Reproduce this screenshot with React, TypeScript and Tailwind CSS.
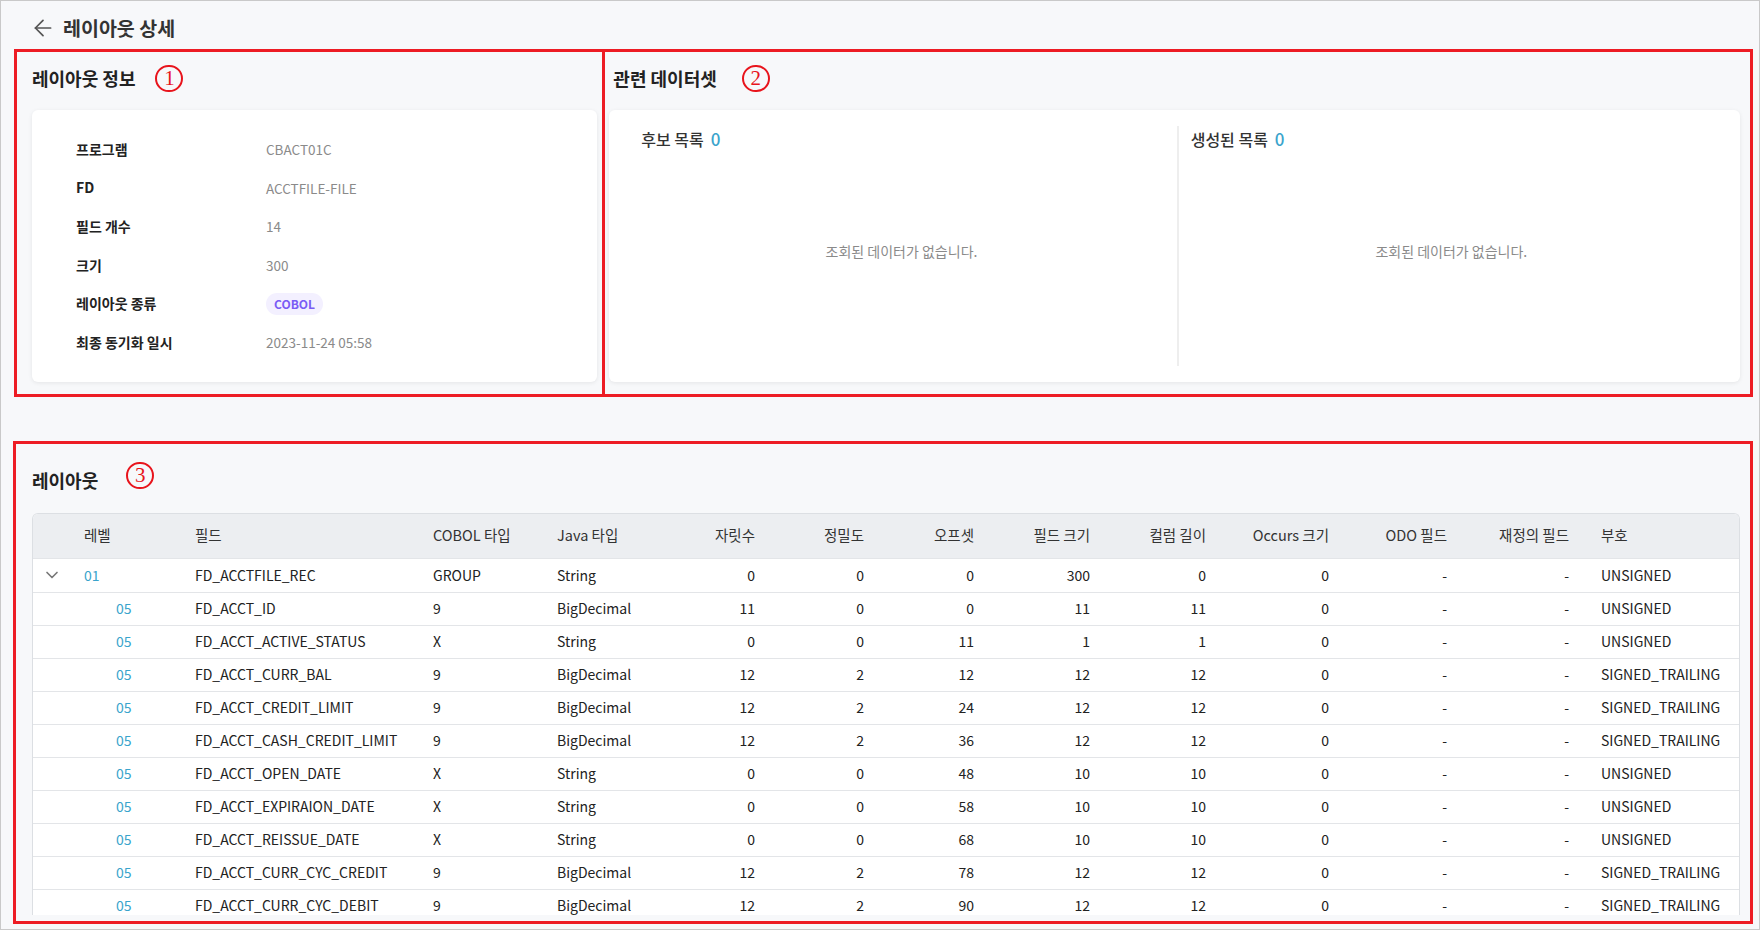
import React from "react";
import { ArrowLeft, ChevronDown } from "lucide-react";

type Row = {
  level: string;
  field: string;
  cobol: string;
  java: string;
  digits: number;
  precision: number;
  offset: number;
  size: number;
  length: number;
  occurs: number;
  odo: string;
  redefines: string;
  sign: string;
};

const rows: Row[] = [
  { level: "01", field: "FD_ACCTFILE_REC", cobol: "GROUP", java: "String", digits: 0, precision: 0, offset: 0, size: 300, length: 0, occurs: 0, odo: "-", redefines: "-", sign: "UNSIGNED" },
  { level: "05", field: "FD_ACCT_ID", cobol: "9", java: "BigDecimal", digits: 11, precision: 0, offset: 0, size: 11, length: 11, occurs: 0, odo: "-", redefines: "-", sign: "UNSIGNED" },
  { level: "05", field: "FD_ACCT_ACTIVE_STATUS", cobol: "X", java: "String", digits: 0, precision: 0, offset: 11, size: 1, length: 1, occurs: 0, odo: "-", redefines: "-", sign: "UNSIGNED" },
  { level: "05", field: "FD_ACCT_CURR_BAL", cobol: "9", java: "BigDecimal", digits: 12, precision: 2, offset: 12, size: 12, length: 12, occurs: 0, odo: "-", redefines: "-", sign: "SIGNED_TRAILING" },
  { level: "05", field: "FD_ACCT_CREDIT_LIMIT", cobol: "9", java: "BigDecimal", digits: 12, precision: 2, offset: 24, size: 12, length: 12, occurs: 0, odo: "-", redefines: "-", sign: "SIGNED_TRAILING" },
  { level: "05", field: "FD_ACCT_CASH_CREDIT_LIMIT", cobol: "9", java: "BigDecimal", digits: 12, precision: 2, offset: 36, size: 12, length: 12, occurs: 0, odo: "-", redefines: "-", sign: "SIGNED_TRAILING" },
  { level: "05", field: "FD_ACCT_OPEN_DATE", cobol: "X", java: "String", digits: 0, precision: 0, offset: 48, size: 10, length: 10, occurs: 0, odo: "-", redefines: "-", sign: "UNSIGNED" },
  { level: "05", field: "FD_ACCT_EXPIRAION_DATE", cobol: "X", java: "String", digits: 0, precision: 0, offset: 58, size: 10, length: 10, occurs: 0, odo: "-", redefines: "-", sign: "UNSIGNED" },
  { level: "05", field: "FD_ACCT_REISSUE_DATE", cobol: "X", java: "String", digits: 0, precision: 0, offset: 68, size: 10, length: 10, occurs: 0, odo: "-", redefines: "-", sign: "UNSIGNED" },
  { level: "05", field: "FD_ACCT_CURR_CYC_CREDIT", cobol: "9", java: "BigDecimal", digits: 12, precision: 2, offset: 78, size: 12, length: 12, occurs: 0, odo: "-", redefines: "-", sign: "SIGNED_TRAILING" },
  { level: "05", field: "FD_ACCT_CURR_CYC_DEBIT", cobol: "9", java: "BigDecimal", digits: 12, precision: 2, offset: 90, size: 12, length: 12, occurs: 0, odo: "-", redefines: "-", sign: "SIGNED_TRAILING" },
];

const info = [
  { label: "프로그램", value: "CBACT01C" },
  { label: "FD", value: "ACCTFILE-FILE" },
  { label: "필드 개수", value: "14" },
  { label: "크기", value: "300" },
  { label: "레이아웃 종류", value: "COBOL", badge: true },
  { label: "최종 동기화 일시", value: "2023-11-24 05:58" },
];

// 주석용 빨간 원 번호
const Marker = ({ n, className = "" }: { n: string; className?: string }) => (
  <span
    className={`inline-flex h-[27px] w-[28px] items-center justify-center rounded-full border-2 border-[#e8141c] font-['Liberation_Serif',serif] text-[21px] leading-none text-[#e8141c] ${className}`}
  >
    {n}
  </span>
);

const EmptyList = ({ title, className }: { title: string; className: string }) => (
  <div className={`flex flex-col ${className}`}>
    <div className="flex h-[26px] items-center gap-[7px]">
      <span className="text-[16px] font-medium text-[#333]">{title}</span>
      <span className="text-[17px] font-medium text-[#3aa4cc]">0</span>
    </div>
    <div className="flex flex-1 items-center justify-center pb-4 text-[14px] text-[#8a8a8a]">
      조회된 데이터가 없습니다.
    </div>
  </div>
);

export default function App() {
  return (
    <div className="relative h-[930px] w-full overflow-hidden border border-[#c9c9c9] bg-[#f7f8fa] pl-[31px] pr-[19px] font-['Noto_Sans_CJK_KR',sans-serif] text-[#222]">
      {/* 헤더 */}
      <div className="flex h-[54px] items-center gap-[7px] -ml-[2px]">
        <ArrowLeft size={26} strokeWidth={1.6} className="text-[#555]" />
        <h1 className="text-[19.5px] font-bold text-[#333]">레이아웃 상세</h1>
      </div>

      {/* 상단 정보 */}
      <div className="mt-[11px] grid grid-cols-[1fr_2fr] gap-3">
        <section className="flex flex-col">
          <div className="mb-5 flex h-6 items-center">
            <h2 className="text-[18px] font-bold">레이아웃 정보</h2>
            <Marker n="1" className="ml-[20px]" />
          </div>
          <div className="flex-1 rounded-md bg-white py-5 pl-[44px] shadow-[0_1px_4px_rgba(0,0,0,0.08)]">
            {info.map((item) => (
              <div key={item.label} className="flex h-[38.6px] items-center">
                <span className="w-[190px] text-[14px] font-bold text-[#222]">{item.label}</span>
                {item.badge ? (
                  <span className="rounded-full bg-[#f3f0ff] px-[8px] py-[2px] text-[12px] font-bold text-[#7a5cf5]">
                    {item.value}
                  </span>
                ) : (
                  <span className="text-[13.5px] text-[#8a8a8a]">{item.value}</span>
                )}
              </div>
            ))}
          </div>
        </section>

        <section className="flex flex-col">
          <div className="mb-5 flex h-6 items-center pl-[4px]">
            <h2 className="text-[18px] font-bold">관련 데이터셋</h2>
            <Marker n="2" className="ml-[25px]" />
          </div>
          <div className="grid h-[272px] grid-cols-2 rounded-md bg-white py-4 pl-8 pr-7 shadow-[0_1px_4px_rgba(0,0,0,0.08)]">
            <EmptyList title="후보 목록" className="pr-[15px]" />
            <EmptyList title="생성된 목록" className="border-l-2 border-[#eeeeee] pl-[12px]" />
          </div>
        </section>
      </div>

      {/* 레이아웃 테이블 */}
      <section className="mt-[86px]">
        <div className="mb-[21px] flex h-6 items-center">
          <h2 className="text-[18px] font-bold">레이아웃</h2>
          <Marker n="3" className="mb-[10px] ml-[28px]" />
        </div>
        <div className="h-[402px] overflow-hidden rounded-t-md border border-b-0 border-[#dcdfe3] bg-white">
          <table className="w-full table-fixed border-collapse text-[14px]">
            <colgroup>
              <col className="w-[35px]" />
              <col className="w-[111px]" />
              <col className="w-[238px]" />
              <col className="w-[124px]" />
              <col className="w-[120px]" />
              <col className="w-[110px]" />
              <col className="w-[109px]" />
              <col className="w-[110px]" />
              <col className="w-[116px]" />
              <col className="w-[116px]" />
              <col className="w-[123px]" />
              <col className="w-[118px]" />
              <col className="w-[122px]" />
              <col />
            </colgroup>
            <thead>
              <tr className="h-[44px] bg-[#eceef1] text-[14.5px] text-[#333]">
                <th />
                <th className="px-4 pb-[2px] text-left font-normal">레벨</th>
                <th className="px-4 pb-[2px] text-left font-normal">필드</th>
                <th className="px-4 pb-[2px] text-left font-normal">COBOL 타입</th>
                <th className="px-4 pb-[2px] text-left font-normal">Java 타입</th>
                <th className="px-4 pb-[2px] text-right font-normal">자릿수</th>
                <th className="px-4 pb-[2px] text-right font-normal">정밀도</th>
                <th className="px-4 pb-[2px] text-right font-normal">오프셋</th>
                <th className="px-4 pb-[2px] text-right font-normal">필드 크기</th>
                <th className="px-4 pb-[2px] text-right font-normal">컬럼 길이</th>
                <th className="px-4 pb-[2px] text-right font-normal">Occurs 크기</th>
                <th className="px-4 pb-[2px] text-right font-normal">ODO 필드</th>
                <th className="px-4 pb-[2px] text-right font-normal">재정의 필드</th>
                <th className="px-4 pb-[2px] text-left font-normal">부호</th>
              </tr>
            </thead>
            <tbody>
              {rows.map((r, i) => (
                <tr key={r.field} className={`border-t border-[#e3e5e8] ${i === 0 ? "h-[34px]" : "h-[33px]"}`}>
                  <td className="pl-[9px]">
                    {i === 0 && <ChevronDown size={20} strokeWidth={2} className="text-[#777]" />}
                  </td>
                  <td className={`px-4 text-[#3aa4cc] ${r.level === "05" ? "pl-[48px]" : ""}`}>{r.level}</td>
                  <td className="px-4">{r.field}</td>
                  <td className="px-4">{r.cobol}</td>
                  <td className="px-4">{r.java}</td>
                  <td className="px-4 text-right">{r.digits}</td>
                  <td className="px-4 text-right">{r.precision}</td>
                  <td className="px-4 text-right">{r.offset}</td>
                  <td className="px-4 text-right">{r.size}</td>
                  <td className="px-4 text-right">{r.length}</td>
                  <td className="px-4 text-right">{r.occurs}</td>
                  <td className="px-4 text-right">{r.odo}</td>
                  <td className="px-4 text-right">{r.redefines}</td>
                  <td className="px-4">{r.sign}</td>
                </tr>
              ))}
            </tbody>
          </table>
        </div>
      </section>

      {/* 주석 박스 (스크린샷 위 표시) */}
      <div className="pointer-events-none absolute left-[13px] top-[48px] h-[348px] w-[591px] border-[3px] border-[#ed1c24]" />
      <div className="pointer-events-none absolute left-[601px] top-[48px] h-[348px] w-[1151px] border-[3px] border-[#ed1c24]" />
      <div className="pointer-events-none absolute left-[12px] top-[440px] h-[483px] w-[1740px] border-[3px] border-[#ed1c24]" />
    </div>
  );
}
